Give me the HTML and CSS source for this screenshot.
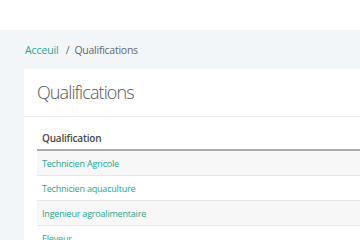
FILE: index.html
```html
<!DOCTYPE html>
<html lang="fr">
<head>
<meta charset="utf-8">
<link rel="stylesheet" href="styles.css">
</head>
<body>
<div class="topbar"></div>
<div class="content">
  <nav class="breadcrumb">
    <a href="#" class="crumb-link">Acceuil</a>
    <span class="sep">/</span>
    <span class="crumb-current">Qualifications</span>
  </nav>
  <section class="card">
    <h1 class="card-title">Qualifications</h1>
    <div class="card-body">
      <table class="table">
        <thead>
          <tr><th>Qualification</th></tr>
        </thead>
        <tbody>
          <tr class="odd"><td><a href="#">Technicien Agricole</a></td></tr>
          <tr><td><a href="#">Technicien aquaculture</a></td></tr>
          <tr class="odd"><td><a href="#">Ingenieur agroalimentaire</a></td></tr>
          <tr><td><a href="#">Eleveur</a></td></tr>
        </tbody>
      </table>
    </div>
  </section>
</div>
</body>
</html>
```
FILE: styles.css
```css
html, body {
  margin: 0;
  padding: 0;
}
body {
  font-family: "Open Sans", "Noto Sans", sans-serif;
  background: #f3f6f9;
  color: #555;
  width: 360px;
  height: 240px;
  overflow: hidden;
}
.topbar {
  height: 30px;
  background: #fff;
}
.content {
  padding-left: 24px;
}
.breadcrumb {
  height: 39px;
  display: flex;
  align-items: center;
  font-size: 10.5px;
  letter-spacing: -0.1px;
  padding-left: 1px;
}
.crumb-link {
  color: #1fa58f;
  text-decoration: none;
}
.sep {
  color: #666;
  margin: 0 5px 0 7px;
}
.crumb-current {
  color: #666;
  letter-spacing: -0.25px;
}
.card {
  background: #fff;
  min-height: 200px;
}
.card-title {
  margin: 0;
  font-weight: 300;
  font-size: 18px;
  letter-spacing: -0.9px;
  color: #555;
  padding: 0 13px;
  height: 47px;
  line-height: 47px;
  border-bottom: 1px solid #e6ecf2;
}
.card-body {
  padding: 10px 0 0 13px;
}
.table {
  width: 100%;
  border-collapse: collapse;
  font-size: 9px;
  letter-spacing: -0.2px;
}
.table th {
  text-align: left;
  font-weight: 600;
  font-size: 10px;
  letter-spacing: -0.2px;
  color: #4a4a4a;
  height: 22px;
  padding: 0 5px;
  border-bottom: 2px solid #aaa;
}
.table td {
  height: 24px;
  padding: 0 5px;
  border-bottom: 1px solid #e8e8e8;
}
.table tr.odd td {
  background: #f7f7f7;
}
.table a {
  color: #1fa58f;
  text-decoration: none;
}
```
